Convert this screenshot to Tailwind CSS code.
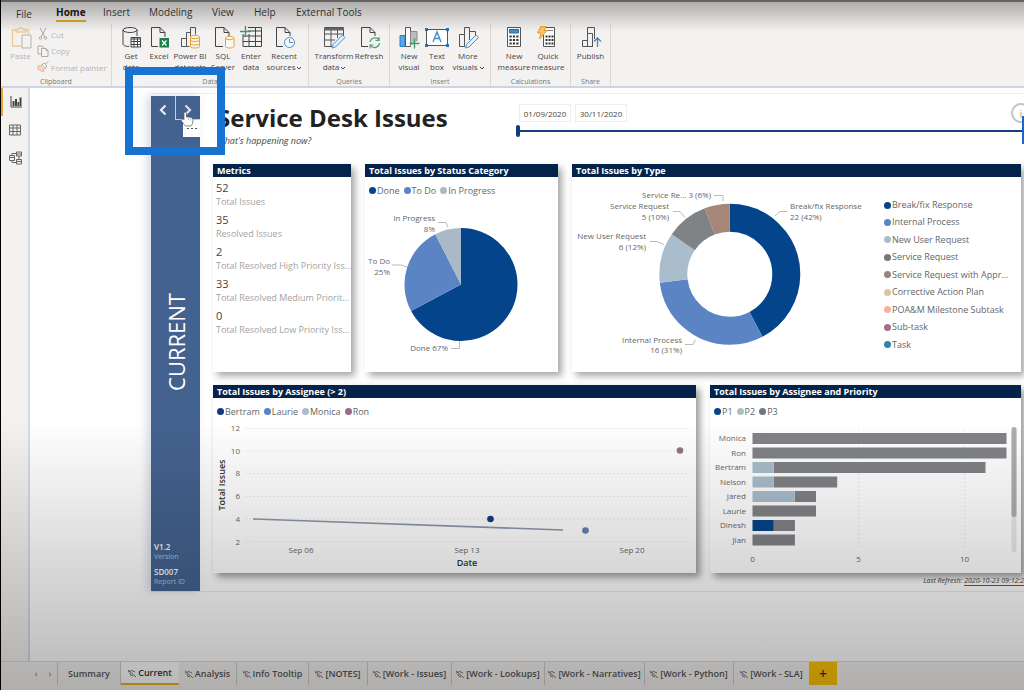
<!DOCTYPE html>
<html lang="en">
<head>
<meta charset="utf-8">
<title>Service Desk Issues</title>
<script src="https://cdn.jsdelivr.net/npm/@tailwindcss/browser@4"></script>
</head>
<body class="relative flex h-screen flex-col overflow-hidden border-l border-black bg-[#f4f2f1] font-['Open_Sans','Noto_Sans',sans-serif] text-[9px] leading-[11px] text-[#555]">

<nav class="flex h-6 shrink-0 items-center border-t-2 border-[#8a8a8a] text-[10px] leading-4 text-[#3a3a3a]">
  <a href="#" class="w-10 pt-[2px] pl-[15px]">File</a>
  <a href="#" class="w-12 pl-[15px] font-bold text-[#1c1c1c]"><span class="inline-block border-b-2 border-[#e3ab1e] leading-[15px]">Home</span></a>
  <a href="#" class="w-[46px] pb-[2px] pl-[14px]">Insert</a>
  <a href="#" class="w-[62px] pb-[2px] pl-[14px]">Modeling</a>
  <a href="#" class="w-[42px] pb-[2px] pl-[15px]">View</a>
  <a href="#" class="w-11 pb-[2px] pl-[15px]">Help</a>
  <a href="#" class="pb-[2px] pl-[13px] whitespace-nowrap">External Tools</a>
</nav>

<header class="flex h-16 shrink-0 border-b-2 border-[#cdd5e2] text-[8px] text-[#444]">
  <section class="flex w-[111px] flex-col justify-between border-r border-[#dcdad9] pt-[2px] text-[#b5b3b1]">
    <div class="flex">
      <button class="flex w-9 flex-col items-center pl-[3px]">
        <svg class="h-6 w-6" viewBox="0 0 24 24" fill="none"><path d="M7 4H3.500v16H12M17 4h2.500v4M7 6V3.500h2.500a2 2 0 0 1 4 0H17V6z" stroke="#f0c896" stroke-width="1.300"/><path d="M13 9h9v13h-9z" stroke="#b5b3b1"/></svg>
        <span>Paste</span>
      </button>
      <div class="flex flex-col">
        <button class="flex h-4 items-center gap-[2px]"><svg class="h-3 w-3" viewBox="0 0 12 12" fill="none" stroke="#aaa"><path d="M3 0l5 9M9 0L4 9"/><circle cx="3.500" cy="10" r="1.300"/><circle cx="8.500" cy="10" r="1.300"/></svg>Cut</button>
        <button class="flex h-[17px] items-center gap-[2px]"><svg class="h-3 w-3" viewBox="0 0 12 12" fill="none" stroke="#aaa"><path d="M4 9H1V1h4l2 2"/><path d="M4.500 3.500H9l2 2v6H4.500zM9 3.500v2h2"/></svg>Copy</button>
        <button class="flex h-4 items-center gap-[2px] whitespace-nowrap"><svg class="h-3 w-3" viewBox="0 0 12 12" fill="none"><path d="M1 5l4-1 3 3-2 4-5-3z" stroke="#eab595" fill="#f5d6c3"/><path d="M5 4l2-2 3 3-2 2M8.500 3L11 .5" stroke="#aaa"/></svg>Format painter</button>
      </div>
    </div>
    <h2 class="text-center text-[7px] leading-[9px] text-[#777]">Clipboard</h2>
  </section>

  <section class="flex w-[197px] flex-col justify-between border-r border-[#dcdad9] pt-[2px]">
    <div class="flex pl-[5px]">
      <button class="flex w-7 flex-col items-center"><svg class="h-6 w-6" viewBox="0 0 24 24" fill="none" stroke="#444"><ellipse cx="11" cy="4" rx="7" ry="2.500"/><path d="M4 4v14c0 1.500 3 2.500 6 2.500M18 4v6"/><path d="M12 11.500h9.500v9.500H12z" fill="#fff"/><path d="M12 13h9.500M12 15.500h9.500M12 18.500h9.500M15 12v9M18.500 12v9"/></svg><span>Get<br>data</span></button>
      <button class="flex w-7 flex-col items-center"><svg class="h-6 w-6" viewBox="0 0 24 24" fill="none"><path d="M11 20.500H4.500v-19H13l5 5V11M13 1.500v5h5" stroke="#444"/><path d="M12.500 12h9.500v9.500h-9.500z" fill="#1c7c4a"/><path d="M15 14.500l4.500 5M19.500 14.500l-4.500 5" stroke="#fff" stroke-width="1.300"/></svg><span>Excel</span></button>
      <button class="flex w-[34px] flex-col items-center"><svg class="h-6 w-6" viewBox="0 0 24 24" fill="none"><path d="M3.500 20.500v-8h5v8zM8.500 20.500v-14h4V10M12.500 7V1.500h5v7M3.500 20.500h8" stroke="#555"/><path d="M12.500 11v9.500c0 2 9 2 9 0V11" fill="#fdf3e2" stroke="#e8a13a"/><ellipse cx="17" cy="11" rx="4.500" ry="1.700" fill="#fdf3e2" stroke="#e8a13a"/><path d="M12.500 14c0 2 9 2 9 0M12.500 17.500c0 2 9 2 9 0" stroke="#e8a13a"/></svg><span class="whitespace-nowrap">Power BI<br>datasets</span></button>
      <button class="flex w-8 flex-col items-center"><svg class="h-6 w-6" viewBox="0 0 24 24" fill="none"><path d="M12 20.500H4.500v-19H13l5 5V10M13 1.500v5h5" stroke="#444"/><path d="M14.500 12v8.500c0 2 8.500 2 8.500 0V12" fill="#fdf7ec" stroke="#e8a13a"/><ellipse cx="18.700" cy="12" rx="4.200" ry="1.700" fill="#fdf7ec" stroke="#e8a13a"/></svg><span>SQL<br>Server</span></button>
      <button class="flex w-6 flex-col items-center"><svg class="h-6 w-6" viewBox="0 0 24 24" fill="none"><path d="M4 8v12.500h18.500v-19H9M4 10h18.500M4 15.500h18.500M10 8v12.500M16.500 2v18.500M9 5h13.500" stroke="#444"/><path d="M6.500 0v11M1 5.500h11" stroke="#3c9a72" stroke-width="1.400"/></svg><span>Enter<br>data</span></button>
      <button class="flex w-[42px] flex-col items-center"><svg class="h-6 w-6" viewBox="0 0 24 24" fill="none"><path d="M11 20.500H4.500v-19H13l5 5V10M13 1.500v5h5" stroke="#444"/><circle cx="17.500" cy="16.500" r="5" fill="#f4f9ff" stroke="#5589b5"/><path d="M17.500 13v3.500H21" stroke="#5589b5"/></svg><span class="whitespace-nowrap">Recent<br>sources<svg class="ml-0.5 inline h-1 w-1" viewBox="0 0 4 4" fill="none" stroke="#444"><path d="M0 1l2 2 2-2"/></svg></span></button>
    </div>
    <h2 class="text-center text-[7px] leading-[9px] text-[#777]">Data</h2>
  </section>

  <section class="flex w-[81px] flex-col justify-between border-r border-[#dcdad9] pt-[2px]">
    <div class="flex pl-1">
      <button class="flex w-[42px] flex-col items-center"><svg class="h-6 w-6" viewBox="0 0 24 24" fill="none"><path d="M2.500 1.500h19v9M2.500 1.500v19H10M2.500 8h19M2.500 14H13M9 4v16M15.500 4v8" stroke="#555"/><path d="M2 2h20v2.500H2z" fill="#666"/><path d="M11 18.500L20.500 9l2.500 2.500-9.500 9.500-3.500 1z" fill="#e3f0fb" stroke="#4a8fc9"/></svg><span class="whitespace-nowrap">Transform<br>data<svg class="ml-0.5 inline h-1 w-1" viewBox="0 0 4 4" fill="none" stroke="#444"><path d="M0 1l2 2 2-2"/></svg></span></button>
      <button class="flex w-7 flex-col items-center"><svg class="h-6 w-6" viewBox="0 0 24 24" fill="none"><path d="M11 20.500H4.500v-19H13l5 5V10M13 1.500v5h5" stroke="#444"/><path d="M13 16a5 5 0 0 1 9-2M22 11v3.500h-3.500M22.500 17a5 5 0 0 1-9 2.500M13 22.500V19h3.500" stroke="#4aa273" stroke-width="1.200"/></svg><span>Refresh</span></button>
    </div>
    <h2 class="text-center text-[7px] leading-[9px] text-[#777]">Queries</h2>
  </section>

  <section class="flex w-[101px] flex-col justify-between border-r border-[#dcdad9] pt-[2px]">
    <div class="flex pl-[3px]">
      <button class="flex w-8 flex-col items-center"><svg class="h-6 w-6" viewBox="0 0 24 24" fill="none"><path d="M3 9.500h5v11H3z" fill="#5aa5e6" stroke="#2f7fc4"/><path d="M8.500 20.500v-19h5v19z" fill="#fff" stroke="#555"/><path d="M13.500 20V5.500H20V15" fill="#bbb" stroke="#888"/><path d="M17.500 12.500v10M12.500 17.500h10" stroke="#3c9a62" stroke-width="1.300"/></svg><span>New<br>visual</span></button>
      <button class="flex w-6 flex-col items-center"><svg class="h-6 w-6" viewBox="0 0 24 24" fill="none"><path d="M1.500 3.500h21v16h-21z" fill="#fff" stroke="#555"/><path d="M8 16l4-10 4 10M9.500 12.500h5" stroke="#3c8fd0" stroke-width="1.400"/><path d="M0 2h3v3H0zM21 2h3v3h-3zM0 18h3v3H0zM21 18h3v3h-3z" fill="#356e9e"/></svg><span>Text<br>box</span></button>
      <button class="flex w-[38px] flex-col items-center"><svg class="h-6 w-6" viewBox="0 0 24 24" fill="none"><path d="M3.500 20.500v-12h5v12zM8.500 20.500v-19h5V14M13.500 5.500h6V9" stroke="#555"/><path d="M10.500 18.500L20 9l2.500 2.500L13 21l-3.500 1z" fill="#e3f0fb" stroke="#4a8fc9"/></svg><span class="whitespace-nowrap">More<br>visuals<svg class="ml-0.5 inline h-1 w-1" viewBox="0 0 4 4" fill="none" stroke="#444"><path d="M0 1l2 2 2-2"/></svg></span></button>
    </div>
    <h2 class="text-center text-[7px] leading-[9px] text-[#777]">Insert</h2>
  </section>

  <section class="flex w-20 flex-col justify-between border-r border-[#dcdad9] pt-[2px]">
    <div class="flex pl-[6px]">
      <button class="flex w-[34px] flex-col items-center"><svg class="h-6 w-6" viewBox="0 0 24 24" fill="none"><path d="M5.500 1.500h13v19h-13z" fill="#fff" stroke="#555"/><path d="M7.500 3.500h9v3.500h-9z" fill="#3c8fd0" stroke="#29689e"/><path d="M7.500 10.500h9M7.500 14h9M7.500 17.500h9" stroke="#333" stroke-width="2" stroke-dasharray="2.200 1.200"/></svg><span>New<br>measure</span></button>
      <button class="flex w-[34px] flex-col items-center"><svg class="h-6 w-6" viewBox="0 0 24 24" fill="none"><path d="M7.500 1.500h11v19h-11z" fill="#fff" stroke="#555"/><path d="M10 4.500h7" stroke="#888"/><path d="M9.500 10.500h8M9.500 14h8M9.500 17.500h8" stroke="#333" stroke-width="2" stroke-dasharray="2 1"/><path d="M5 0h5L8 4.500h3L3.500 13 5 7H1.500z" fill="#fbc36b" stroke="#e89a2c"/></svg><span>Quick<br>measure</span></button>
    </div>
    <h2 class="text-center text-[7px] leading-[9px] text-[#777]">Calculations</h2>
  </section>

  <section class="flex w-10 flex-col justify-between border-r border-[#dcdad9] pt-[2px]">
    <button class="flex flex-col items-center"><svg class="h-6 w-6" viewBox="0 0 24 24" fill="none"><path d="M3.500 20.500v-6h5v6zM8.500 20.500v-13h5v13zM8.500 7.500v-6h7V13M3.500 20.500H14" stroke="#555"/><path d="M18.500 21v-8.500M15 15.500l3.500-3.500 3.500 3.500" stroke="#4a7fb9" stroke-width="1.300"/></svg><span>Publish</span></button>
    <h2 class="text-center text-[7px] leading-[9px] text-[#777]">Share</h2>
  </section>
</header>

<div class="flex min-h-0 flex-1">
  <aside class="flex w-[29px] shrink-0 flex-col border-r-2 border-[#d4dbe8]">
    <button class="flex h-7 items-center border-l-2 border-[#e8a63a] pl-[7px]" aria-label="Report view"><svg class="h-3 w-3" viewBox="0 0 12 12"><path d="M1 0v11h11" fill="none" stroke="#444"/><path d="M2.500 5h2v5h-2zM5 3h2v7H5zM7.500 6h1.500v4H7.500zM9.500 1.500h2V10h-2z" fill="#444"/></svg></button>
    <button class="flex h-7 items-center pl-2" aria-label="Data view"><svg class="h-3 w-3" viewBox="0 0 12 12" fill="none" stroke="#666"><path d="M.5 1h11v10H.5zM.5 4h11M.5 7.500h11M4 1v10M8 1v10"/></svg></button>
    <button class="flex h-7 items-center pl-2" aria-label="Model view"><svg class="h-[14px] w-[14px]" viewBox="0 0 14 14" fill="none" stroke="#666"><path d="M.5 4.500h5v5h-5zM7.500 1h5v4h-5zM7.500 8.500h5V13h-5zM3 4.500V2.500h4.500M3 9.500V11.500h4.500M7.500 3h5M7.500 10.500h5M.5 6.500h5M10 5v3.500"/></svg></button>
  </aside>

  <main class="min-w-0 flex-1 bg-white pt-[5px]">
    <div class="ml-[121px] flex border-y border-[#ececec] pt-[2px]">
      <aside class="relative flex w-[49px] shrink-0 flex-col bg-[#44628f] text-white shadow-[-4px_0_8px_rgba(90,110,160,0.25)]">
        <div class="flex h-6">
          <button class="flex flex-1 items-center justify-center pt-1" aria-label="Previous page"><svg class="h-3 w-3" viewBox="0 0 12 12" fill="none" stroke="#e6edf6" stroke-width="2.200"><path d="M8.500 1.500L4 6l4.500 4.500"/></svg></button>
          <button class="flex flex-1 items-center justify-center border-b border-l border-[#c3cde0] pt-1" aria-label="Next page"><svg class="h-3 w-3" viewBox="0 0 12 12" fill="none" stroke="#d6e0ee" stroke-width="2.200"><path d="M3.500 1.500L8 6l-4.500 4.500"/></svg></button>
        </div>
        <div class="absolute top-6 right-0 flex h-[17px] w-[17px] items-center justify-center gap-[2px] bg-white"><i class="h-px w-[2px] bg-[#555]"></i><i class="h-px w-[2px] bg-[#555]"></i><i class="h-px w-[2px] bg-[#555]"></i></div>
        <svg class="absolute top-[15px] left-[29px] h-4 w-[14px]" viewBox="0 0 14 16"><path d="M4 9V2a1.300 1.300 0 0 1 2.500 0v4c3 0 6.500 0 6.500 3 0 3-1 5-2 6H5.500C4 13 2 11 1 9c0-1.500 2-1.500 3 0z" fill="#fff" stroke="#555" stroke-width=".7"/><path d="M8.500 7v2M10.700 7.500v2" stroke="#888" stroke-width=".6"/></svg>
        <div class="flex flex-1 items-center justify-center pt-[22px]"><span class="rotate-180 text-[22px] leading-8 [writing-mode:vertical-rl]">CURRENT</span></div>
        <dl class="pb-1 pl-[3px] text-[8px] leading-[10px]">
          <dt class="font-semibold">V1.2</dt><dd class="mb-[5px] text-[7px] text-[#b5c1d6]">Version</dd>
          <dt class="font-semibold">SD007</dt><dd class="text-[7px] text-[#b5c1d6]">Report ID</dd>
        </dl>
      </aside>

      <div class="min-w-0 flex-1 pl-[13px]">
        <div class="relative flex h-[68px] justify-between">
          <div class="pt-1 pl-1">
            <h1 class="text-[24px] leading-9 font-bold text-[#222]">Service Desk Issues</h1>
            <p class="text-[9px] leading-[10px] text-[#444] italic">What's happening now?</p>
          </div>
          <div class="absolute top-[7px] right-0 left-[303px]">
            <div class="flex items-center gap-1 pl-[3px]">
              <input aria-label="Start date" value="01/09/2020" class="h-[18px] w-[52px] border border-[#eee] text-center text-[8px] text-[#444]">
              <input aria-label="End date" value="30/11/2020" class="h-[18px] w-[52px] border border-[#eee] text-center text-[8px] text-[#444]">
              <button aria-label="Information" class="-mr-[7px] ml-auto h-5 w-5 rounded-full border-2 border-[#c4c4c4] text-[11px] text-[#aaa]">i</button>
            </div>
            <input type="range" min="0" max="100" value="0" aria-label="Date range" class="mt-[7px] block h-[2px] w-full appearance-none bg-[#14408a] [&::-webkit-slider-thumb]:h-3 [&::-webkit-slider-thumb]:w-1 [&::-webkit-slider-thumb]:appearance-none [&::-webkit-slider-thumb]:rounded-sm [&::-webkit-slider-thumb]:bg-[#0d3c82]">
            <div class="absolute right-0 -bottom-3 h-7 w-[2px] bg-[#1766d0]"></div>
          </div>
        </div>

        <div class="mr-[3px] grid grid-cols-[minmax(0,138fr)_minmax(0,193fr)_minmax(0,449fr)] gap-[14px]">
          <section class="h-[208px] bg-white shadow-[4px_4px_7px_rgba(0,0,0,0.35)]">
            <h2 class="h-[13px] bg-[#04234a] pl-1 text-[9px] leading-[13px] font-bold text-white">Metrics</h2>
            <dl class="flex flex-col gap-[7px] pt-[5px] pl-[3px] leading-3 whitespace-nowrap text-[#a3a3a3]">
              <div><dt class="text-[11px] text-[#444]">52</dt><dd class="pt-[2px] leading-[11px]">Total Issues</dd></div>
              <div><dt class="text-[11px] text-[#444]">35</dt><dd class="pt-[2px] leading-[11px]">Resolved Issues</dd></div>
              <div><dt class="text-[11px] text-[#444]">2</dt><dd class="pt-[2px] leading-[11px]">Total Resolved High Priority Iss...</dd></div>
              <div><dt class="text-[11px] text-[#444]">33</dt><dd class="pt-[2px] leading-[11px]">Total Resolved Medium Priorit...</dd></div>
              <div><dt class="text-[11px] text-[#444]">0</dt><dd class="pt-[2px] leading-[11px]">Total Resolved Low Priority Iss...</dd></div>
            </dl>
          </section>

          <section class="h-[208px] bg-white shadow-[4px_4px_7px_rgba(0,0,0,0.35)]">
            <h2 class="h-[13px] bg-[#04234a] pl-1 text-[9px] leading-[13px] font-bold text-white">Total Issues by Status Category</h2>
            <ul class="flex h-[22px] items-center gap-1 pt-[5px] pl-1 text-[9px] text-[#666]">
              <li class="flex items-center gap-px"><i class="h-[7px] w-[7px] rounded-full bg-[#03448a]"></i>Done</li>
              <li class="flex items-center gap-px"><i class="h-[7px] w-[7px] rounded-full bg-[#5a84c4]"></i>To Do</li>
              <li class="flex items-center gap-px"><i class="h-[7px] w-[7px] rounded-full bg-[#a9b9c6]"></i>In Progress</li>
            </ul>
            <svg class="w-full" viewBox="365 199 193 170" font-size="8" fill="#666">
              <path d="M461 284.500V228a56.500 56.500 0 1 1-49.900 83z" fill="#03448a"/>
              <path d="M461 284.500L411.100 311A56.500 56.500 0 0 1 435.300 234.200z" fill="#5a84c4"/>
              <path d="M461 284.500L435.300 234.200A56.500 56.500 0 0 1 461 228z" fill="#a9b9c6"/>
              <g fill="none" stroke="#bbb"><path d="M438 222.500h8l2 5M392 265h9l6 2M451 348.500h8.500V341"/></g>
              <g text-anchor="end"><text x="435" y="221">In Progress</text><text x="435" y="232">8%</text><text x="390" y="264">To Do</text><text x="390" y="275">25%</text><text x="448" y="351">Done 67%</text></g>
            </svg>
          </section>

          <section class="flex h-[208px] flex-col bg-white shadow-[4px_4px_7px_rgba(0,0,0,0.35)]">
            <h2 class="h-[13px] bg-[#04234a] pl-1 text-[9px] leading-[13px] font-bold text-white">Total Issues by Type</h2>
            <div class="flex flex-1">
              <svg class="w-[312px] shrink-0" viewBox="572 177 312 195" font-size="8" fill="#666">
                <g fill="none" stroke-width="28" transform="rotate(-90 729.800 274.300)">
                  <circle cx="729.800" cy="274.300" r="56.500" pathLength="52" stroke="#03448a" stroke-dasharray="22 30"/>
                  <circle cx="729.800" cy="274.300" r="56.500" pathLength="52" stroke="#5a84c4" stroke-dasharray="16 36" stroke-dashoffset="-22"/>
                  <circle cx="729.800" cy="274.300" r="56.500" pathLength="52" stroke="#a9bdcc" stroke-dasharray="6 46" stroke-dashoffset="-38"/>
                  <circle cx="729.800" cy="274.300" r="56.500" pathLength="52" stroke="#808386" stroke-dasharray="5 47" stroke-dashoffset="-44"/>
                  <circle cx="729.800" cy="274.300" r="56.500" pathLength="52" stroke="#a68676" stroke-dasharray="3 49" stroke-dashoffset="-49"/>
                </g>
                <g fill="none" stroke="#bbb"><path d="M714 195.500h9V201M673 211.500h7l5 6M650 241.500h7l7 3M775 216l5-4.500h7M685 344.500h8l2.500-5"/></g>
                <g text-anchor="end"><text x="711" y="198">Service Re... 3 (6%)</text><text x="669" y="209">Service Request</text><text x="669" y="220">5 (10%)</text><text x="646" y="239">New User Request</text><text x="646" y="250">6 (12%)</text><text x="682" y="343">Internal Process</text><text x="682" y="353">16 (31%)</text></g>
                <text x="790" y="209">Break/fix Response</text><text x="790" y="220">22 (42%)</text>
              </svg>
              <ul class="flex min-w-0 flex-1 flex-col gap-[7px] pt-[23px] text-[9px] whitespace-nowrap text-[#666]">
                <li class="flex items-center gap-px leading-[10px]"><i class="h-[7px] w-[7px] rounded-full bg-[#03448a]"></i>Break/fix Response</li>
                <li class="flex items-center gap-px leading-[10px]"><i class="h-[7px] w-[7px] rounded-full bg-[#5a84c4]"></i>Internal Process</li>
                <li class="flex items-center gap-px leading-[11px]"><i class="h-[7px] w-[7px] rounded-full bg-[#a9bdcc]"></i>New User Request</li>
                <li class="flex items-center gap-px leading-[10px]"><i class="h-[7px] w-[7px] rounded-full bg-[#75787b]"></i>Service Request</li>
                <li class="flex items-center gap-px leading-[11px]"><i class="h-[7px] w-[7px] rounded-full bg-[#958480]"></i>Service Request with Appr...</li>
                <li class="flex items-center gap-px leading-[10px]"><i class="h-[7px] w-[7px] rounded-full bg-[#dcc5a4]"></i>Corrective Action Plan</li>
                <li class="flex items-center gap-px leading-[11px]"><i class="h-[7px] w-[7px] rounded-full bg-[#f2b3a0]"></i>POA&amp;M Milestone Subtask</li>
                <li class="flex items-center gap-px leading-[10px]"><i class="h-[7px] w-[7px] rounded-full bg-[#a3708f]"></i>Sub-task</li>
                <li class="flex items-center gap-px leading-[11px]"><i class="h-[7px] w-[7px] rounded-full bg-[#2a86ad]"></i>Task</li>
              </ul>
            </div>
          </section>
        </div>

        <div class="mt-[13px] mr-[3px] grid grid-cols-[minmax(0,483fr)_minmax(0,311fr)] gap-[14px]">
          <section class="h-[188px] bg-white shadow-[4px_4px_7px_rgba(0,0,0,0.4)]">
            <h2 class="h-[13px] bg-[#04234a] pl-1 text-[9px] leading-[13px] font-bold text-white">Total Issues by Assignee (&gt; 2)</h2>
            <ul class="flex h-[22px] items-center gap-1 pt-[5px] pl-1 text-[9px] text-[#666]">
              <li class="flex items-center gap-px"><i class="h-[7px] w-[7px] rounded-full bg-[#123a7c]"></i>Bertram</li>
              <li class="flex items-center gap-px"><i class="h-[7px] w-[7px] rounded-full bg-[#5a84c4]"></i>Laurie</li>
              <li class="flex items-center gap-px"><i class="h-[7px] w-[7px] rounded-full bg-[#a9bdcc]"></i>Monica</li>
              <li class="flex items-center gap-px"><i class="h-[7px] w-[7px] rounded-full bg-[#9c6c80]"></i>Ron</li>
            </ul>
            <svg class="w-full" viewBox="213 420 483 153" font-size="8" fill="#666">
              <g stroke="#d8d8d8" stroke-dasharray="1 3"><path d="M246 428.500h442M246 451h442M246 473.500h442M246 496.500h442M246 519h442M246 541.500h442"/></g>
              <g text-anchor="end"><text x="240" y="431">12</text><text x="240" y="454">10</text><text x="240" y="476">8</text><text x="240" y="499">6</text><text x="240" y="522">4</text><text x="240" y="545">2</text></g>
              <g text-anchor="middle"><text x="301" y="553">Sep 06</text><text x="467" y="553">Sep 13</text><text x="632" y="553">Sep 20</text>
              <text x="467" y="566" font-size="9" font-weight="600" fill="#333">Date</text>
              <text transform="translate(225 485) rotate(-90)" font-size="9" font-weight="600" fill="#333">Total Issues</text></g>
              <path d="M253 519L563 530" stroke="#8b98ab" stroke-width="1.600" fill="none"/>
              <circle cx="490.500" cy="519" r="3.300" fill="#0c3f86"/><circle cx="585.500" cy="530.500" r="3.300" fill="#6480b8"/><circle cx="680" cy="450.500" r="3.300" fill="#96727f"/>
            </svg>
          </section>

          <section class="h-[188px] bg-white shadow-[4px_4px_7px_rgba(0,0,0,0.4)]">
            <h2 class="h-[13px] bg-[#04234a] pl-1 text-[9px] leading-[13px] font-bold text-white">Total Issues by Assignee and Priority</h2>
            <ul class="flex h-[22px] items-center gap-1 pt-[5px] pl-1 text-[9px] text-[#666]">
              <li class="flex items-center gap-px"><i class="h-[7px] w-[7px] rounded-full bg-[#03448a]"></i>P1</li>
              <li class="flex items-center gap-px"><i class="h-[7px] w-[7px] rounded-full bg-[#b4bcc2]"></i>P2</li>
              <li class="flex items-center gap-px"><i class="h-[7px] w-[7px] rounded-full bg-[#75787b]"></i>P3</li>
            </ul>
            <svg class="w-full" viewBox="710 420 311 153" font-size="8" fill="#666">
              <path d="M858.500 430v118M964.500 430v118" stroke="#d8d8d8" stroke-dasharray="1 3"/>
              <g fill="#808285"><path d="M752.500 433h254v11h-254zM752.500 447.500h254v11h-254zM773.700 462h211.800v11H773.700zM773.700 476.500h63.500v11h-63.500zM794.800 491h21.200v11h-21.200zM752.500 505.500H816v11h-63.500zM773.700 520h21.200v11h-21.200zM752.500 534.500h42.400v11h-42.400z"/></g>
              <path d="M752.500 462h21.200v11h-21.200zM752.500 476.500h21.200v11h-21.200zM752.500 491h42.300v11h-42.300z" fill="#a9bdcc"/>
              <path d="M752.500 520h21.200v11h-21.200z" fill="#03448a"/>
              <g text-anchor="end"><text x="746" y="441">Monica</text><text x="746" y="456">Ron</text><text x="746" y="470">Bertram</text><text x="746" y="485">Nelson</text><text x="746" y="499">Jared</text><text x="746" y="514">Laurie</text><text x="746" y="528">Dinesh</text><text x="746" y="543">Jian</text></g>
              <g text-anchor="middle"><text x="752.500" y="562">0</text><text x="858.500" y="562">5</text><text x="964.500" y="562">10</text></g>
              <rect x="1011.500" y="427" width="5" height="125" rx="2.500" fill="#e8e8e8"/><rect x="1011.500" y="427" width="5" height="90" rx="2.500" fill="#adadad"/>
            </svg>
          </section>
        </div>
        <p class="h-[18px] pt-[3px] text-right text-[7px] leading-[10px] whitespace-nowrap text-[#444] italic">Last Refresh: <a href="#" class="border-b border-[#44628f]">2020-10-23 09:12:2</a></p>
      </div>
    </div>
  </main>
</div>

<footer class="flex h-[29px] shrink-0 border-t border-[#dcdad9] pb-[5px] pl-7 text-[9px] font-semibold whitespace-nowrap text-[#555]">
  <div class="flex w-7 items-center justify-around text-[#888]"><button aria-label="Scroll tabs left">‹</button><button aria-label="Scroll tabs right">›</button></div>
  <button class="w-16 border-x border-[#cfcdcc]">Summary</button>
  <button class="flex w-[58px] items-center justify-center gap-[2px] border-b-2 border-[#efb41c] bg-white text-[#333]"><svg class="h-2 w-2 shrink-0" viewBox="0 0 8 8" fill="none" stroke="#777"><path d="M0 3q4-3 7 0M0 1l8 7M2 4q0 3 3 3"/></svg>Current</button>
  <button class="flex w-[58px] items-center justify-center gap-[2px] border-r border-[#cfcdcc]"><svg class="h-2 w-2 shrink-0" viewBox="0 0 8 8" fill="none" stroke="#777"><path d="M0 3q4-3 7 0M0 1l8 7M2 4q0 3 3 3"/></svg>Analysis</button>
  <button class="flex w-[72px] items-center justify-center gap-[2px] border-r border-[#cfcdcc]"><svg class="h-2 w-2 shrink-0" viewBox="0 0 8 8" fill="none" stroke="#777"><path d="M0 3q4-3 7 0M0 1l8 7M2 4q0 3 3 3"/></svg>Info Tooltip</button>
  <button class="flex w-[59px] items-center justify-center gap-[2px] border-r border-[#cfcdcc]"><svg class="h-2 w-2 shrink-0" viewBox="0 0 8 8" fill="none" stroke="#777"><path d="M0 3q4-3 7 0M0 1l8 7M2 4q0 3 3 3"/></svg>[NOTES]</button>
  <button class="flex w-[84px] items-center justify-center gap-[2px] border-r border-[#cfcdcc]"><svg class="h-2 w-2 shrink-0" viewBox="0 0 8 8" fill="none" stroke="#777"><path d="M0 3q4-3 7 0M0 1l8 7M2 4q0 3 3 3"/></svg>[Work - Issues]</button>
  <button class="flex w-[93px] items-center justify-center gap-[2px] border-r border-[#cfcdcc]"><svg class="h-2 w-2 shrink-0" viewBox="0 0 8 8" fill="none" stroke="#777"><path d="M0 3q4-3 7 0M0 1l8 7M2 4q0 3 3 3"/></svg>[Work - Lookups]</button>
  <button class="flex w-[100px] items-center justify-center gap-[2px] border-r border-[#cfcdcc]"><svg class="h-2 w-2 shrink-0" viewBox="0 0 8 8" fill="none" stroke="#777"><path d="M0 3q4-3 7 0M0 1l8 7M2 4q0 3 3 3"/></svg>[Work - Narratives]</button>
  <button class="flex w-[89px] items-center justify-center gap-[2px] border-r border-[#cfcdcc]"><svg class="h-2 w-2 shrink-0" viewBox="0 0 8 8" fill="none" stroke="#777"><path d="M0 3q4-3 7 0M0 1l8 7M2 4q0 3 3 3"/></svg>[Work - Python]</button>
  <button class="flex w-[75px] items-center justify-center gap-[2px]"><svg class="h-2 w-2 shrink-0" viewBox="0 0 8 8" fill="none" stroke="#777"><path d="M0 3q4-3 7 0M0 1l8 7M2 4q0 3 3 3"/></svg>[Work - SLA]</button>
  <button class="w-7 bg-[#ffc408] text-sm text-[#333]" aria-label="New page">+</button>
</footer>

<div class="pointer-events-none absolute inset-x-0 top-0 h-8 bg-linear-to-b from-black/30 to-transparent"></div>
<div class="pointer-events-none absolute inset-x-0 bottom-0 h-[270px] bg-linear-to-b from-transparent to-black/28"></div>
<div class="pointer-events-none absolute top-[67px] left-[124px] h-[88px] w-[100px] border-8 border-[#1673d1]"></div>
</body>
</html>
